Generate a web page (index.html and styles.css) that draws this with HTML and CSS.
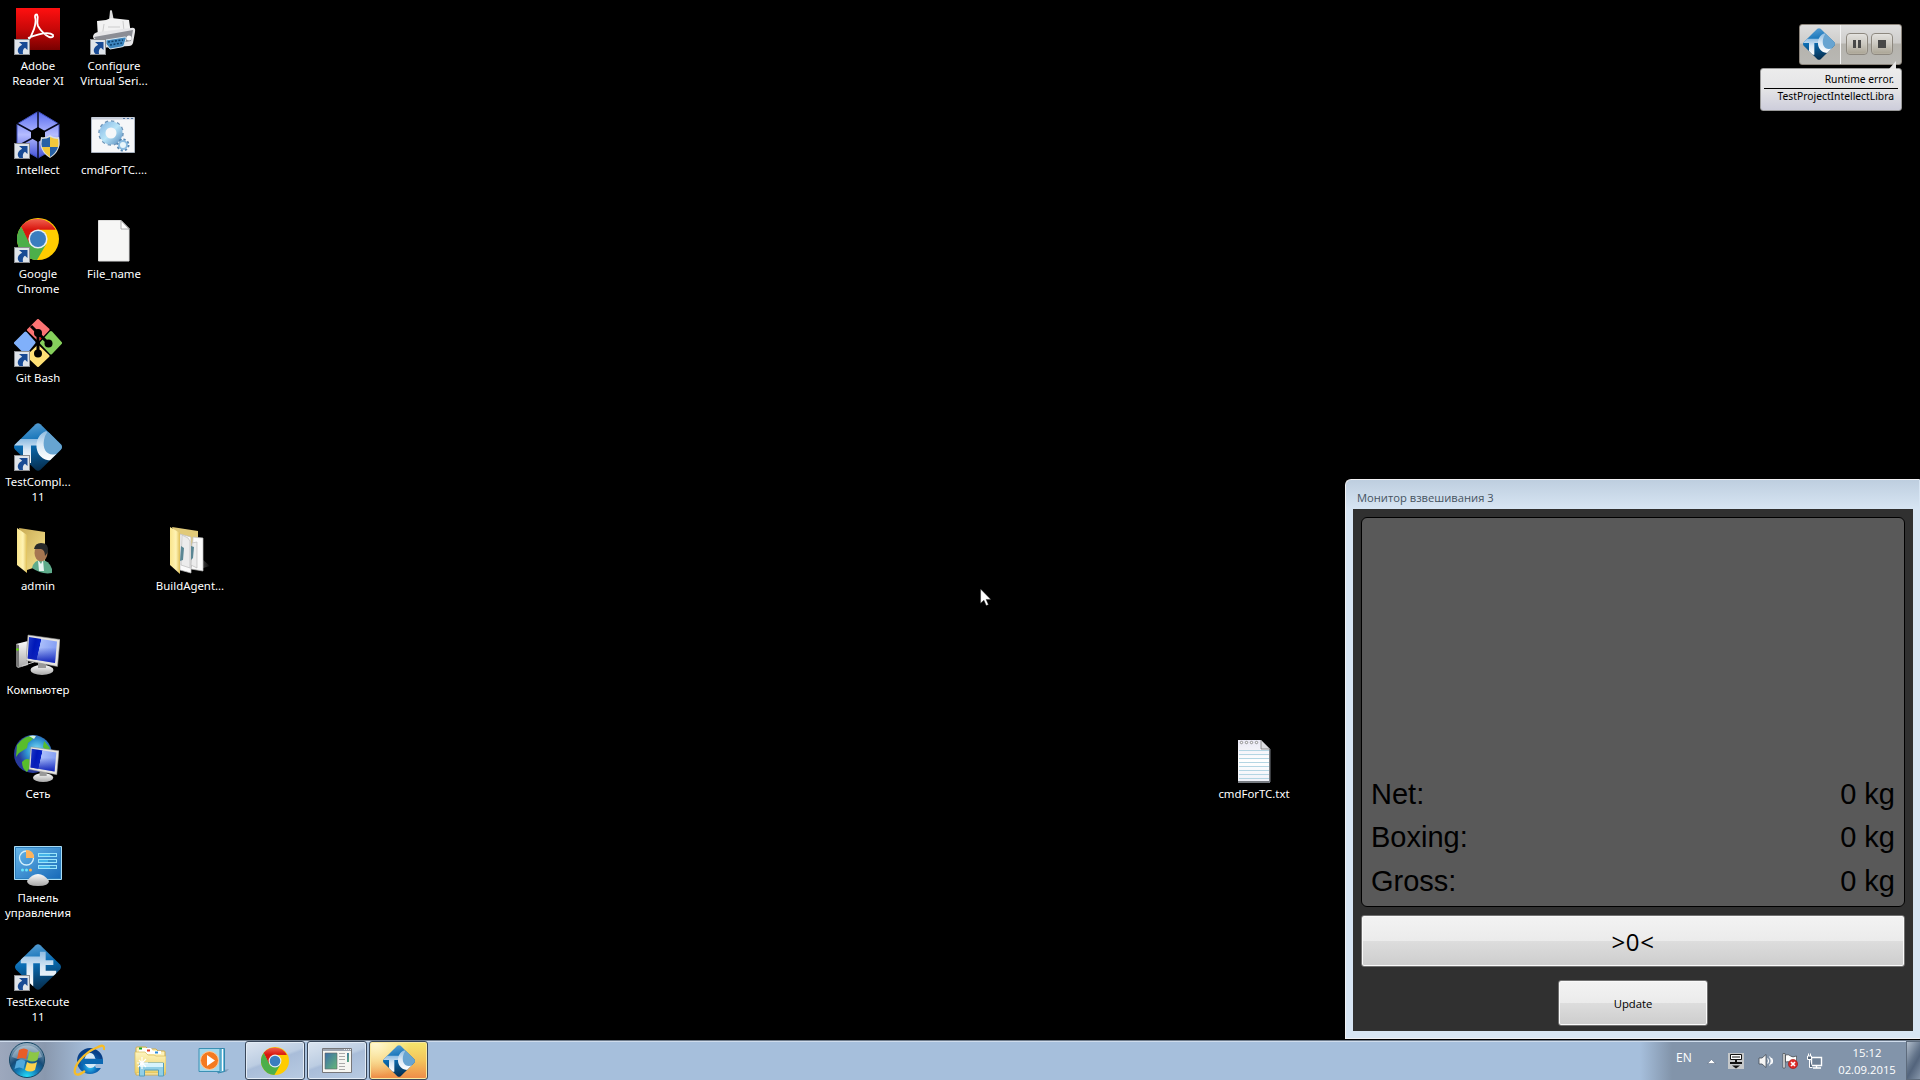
FILE: index.html
```html
<!DOCTYPE html>
<html lang="ru">
<head>
<meta charset="utf-8">
<title>Desktop</title>
<link rel="stylesheet" href="styles.css">
</head>
<body>
<svg class="defs" width="0" height="0">
  <defs>
    <linearGradient id="red" x2="0" y2="1"><stop stop-color="#ff1010"/><stop offset=".5" stop-color="#c80808"/><stop offset="1" stop-color="#780000"/></linearGradient>
    <linearGradient id="tcblue" x1=".2" y1="0" x2=".4" y2="1"><stop stop-color="#5da2d6"/><stop offset=".45" stop-color="#0a6db4"/><stop offset="1" stop-color="#062f50"/></linearGradient>
    <linearGradient id="tcwhite" x2="0" y2="1"><stop stop-color="#8dbce2"/><stop offset=".45" stop-color="#d8e7f4"/><stop offset="1" stop-color="#fff"/></linearGradient>
    <linearGradient id="hex" x2="0" y2="1"><stop stop-color="#5569ee"/><stop offset=".5" stop-color="#b5bcff"/><stop offset="1" stop-color="#4351d8"/></linearGradient>
    <linearGradient id="folder" x2="1" y2="0"><stop stop-color="#f9e48b"/><stop offset=".6" stop-color="#fff3b4"/><stop offset="1" stop-color="#dfbf57"/></linearGradient>
    <linearGradient id="folderback" x2="1" y2="1"><stop stop-color="#c9ab55"/><stop offset="1" stop-color="#f7e48e"/></linearGradient>
    <linearGradient id="screen" x2="1" y2=".2"><stop stop-color="#203cc8"/><stop offset=".28" stop-color="#0018b8"/><stop offset=".45" stop-color="#0420c4"/><stop offset=".47" stop-color="#a9bdfa"/><stop offset="1" stop-color="#86a0f4"/></linearGradient>
    <linearGradient id="screenfade" x2="0" y2="1"><stop offset=".4" stop-color="#1022b8" stop-opacity="0"/><stop offset="1" stop-color="#1022b8"/></linearGradient>
    <linearGradient id="metal" x2="0" y2="1"><stop stop-color="#fbfbfb"/><stop offset="1" stop-color="#a7a7a7"/></linearGradient>
    <radialGradient id="globe" cx=".6" cy=".4"><stop stop-color="#83e2fa"/><stop offset=".55" stop-color="#2e92d0"/><stop offset="1" stop-color="#27399a"/></radialGradient>
    <linearGradient id="panel" x2="1" y2="1"><stop stop-color="#69b8ea"/><stop offset="1" stop-color="#1668b8"/></linearGradient>
    <linearGradient id="gear" x2="1" y2="1"><stop stop-color="#8fc0e8"/><stop offset=".5" stop-color="#b9e5f8"/><stop offset="1" stop-color="#6ea0cc"/></linearGradient>
    <linearGradient id="shadefade" x2="1" y2="0"><stop stop-color="#555"/><stop offset="1" stop-color="#000"/></linearGradient>
    <radialGradient id="orb" cx=".5" cy="1" r=".95"><stop stop-color="#25e6ff"/><stop offset=".35" stop-color="#1378b4"/><stop offset=".6" stop-color="#164c78"/><stop offset="1" stop-color="#8fa9bd"/></radialGradient>
    <radialGradient id="ie" cx=".5" cy=".8" r=".8"><stop stop-color="#30c8fa"/><stop offset=".5" stop-color="#0b66b4"/><stop offset="1" stop-color="#083f86"/></radialGradient>
    <linearGradient id="files" x2="0" y2="1"><stop stop-color="#fdf4c0"/><stop offset="1" stop-color="#eed168"/></linearGradient>
    <linearGradient id="crred" x2="0" y2="1"><stop stop-color="#f0604f"/><stop offset=".5" stop-color="#d9170f"/></linearGradient>
    <linearGradient id="thumb" x2="1" y2="1"><stop stop-color="#3e6ea8"/><stop offset="1" stop-color="#64b878"/></linearGradient>
    <linearGradient id="paper" x2="0" y2="1"><stop stop-color="#e9e8f4"/><stop offset=".5" stop-color="#fff"/><stop offset="1" stop-color="#eff1f8"/></linearGradient>
    <symbol id="shortcut" viewBox="0 0 16 16">
      <path fill="#8b8d91" d="M0 0h16v16H0z"/><path fill="#dfe4ea" d="M1 1h14v14H1z"/>
      <path fill="#184a94" d="M5 3h8.500v8l-2.500-2.300C9 10 8.500 12 9 15H5.500C2.500 12 3.500 8 8.200 5.700z"/>
    </symbol>
    <symbol id="tc" viewBox="0 0 48 48">
      <clipPath id="dia"><path d="M21.500 1.300Q24 -.7 26.500 1.300L47 21.500Q49 24 47 26.500L26.500 46.700Q24 48.700 21.500 46.700L1 26.500Q-1 24 1 21.500z"/></clipPath>
      <g clip-path="url(#dia)"><path fill="url(#tcblue)" d="M0 0h48v48H0z"/>
      <circle cx="37" cy="21" r="12" fill="#67a4d1"/>
      <path fill="url(#tcwhite)" d="M0 16h24v6.500h-7V40H9V22.500H0z"/>
      <path fill="url(#tcwhite)" d="M32 8C18 13 19 38 38 37.500L45 30C34 35 28 27 30 17Q31 11 34 9z"/></g>
    </symbol>
    <symbol id="te" viewBox="0 0 48 48">
      <g clip-path="url(#dia)"><path fill="url(#tcblue)" d="M0 0h48v48H0z"/>
      <path fill="url(#tcwhite)" d="M6 13h20V8h6v9h8v5h-8v6h11v5H26V20h-7v24h-7V20H6z"/></g>
    </symbol>
    <symbol id="chrome" viewBox="0 0 42 42">
      <circle cx="21" cy="21" r="21" fill="#fc0"/>
      <path fill="url(#crred)" d="M4.200 8.500A21 21 0 0 1 38.500 11.500H21L12 26z"/>
      <path fill="#4caf4a" d="M4.200 8.500A21 21 0 0 0 20 42L29 26.500H13z"/>
      <path fill="url(#crred)" d="M4.200 8.500A21 21 0 0 1 38.500 11.500H21L12.500 22z"/>
      <circle cx="21" cy="21" r="9.600" fill="#e8eef4"/><circle cx="21" cy="21" r="8" fill="#3a7dbf"/>
    </symbol>
    <symbol id="monitor" viewBox="0 0 34 42">
      <ellipse cx="16" cy="36" rx="11.500" ry="5" fill="url(#metal)"/><path fill="#999" d="M12 28h8v6h-8z"/>
      <path fill="#e6e4e0" stroke="#8d8d8d" stroke-width=".6" d="M2 1l32 4.500-2.500 27L0 26.500z"/>
      <path fill="url(#screen)" d="M3 3l28 4.500-2 21.500L1.700 24.500z"/><path fill="url(#screenfade)" d="M3 3l28 4.500-2 21.500L1.700 24.500z"/>
    </symbol>
  </defs>
</svg>

<main class="desktop">
  <div class="item r1 c1"><svg class="icon" viewBox="0 0 48 48"><path fill="url(#red)" d="M2 1h44v42H2z"/><path fill="none" stroke="#fff" stroke-width="1.800" d="M13 35C19 28 23 16 21 10Q21 7 23 7.500C25 11 22 15 24 19Q28 26 35 30Q40 31 39 28Q34 23 14 31"/><use href="#shortcut" y="32" width="16" height="16"/></svg><span class="label">Adobe<br>Reader XI</span></div>
  <div class="item r2 c1"><svg class="icon" viewBox="0 0 48 48"><path fill="url(#hex)" stroke="#4050bb" d="M24 .5L45 13v22L24 47 3 35V13z"/><path stroke="#070a20" stroke-width="1.500" d="M24 0v48M3 12.500l42 23M45 12.500l-42 23"/><path fill="#000" d="M24 16l7 4v7l-7 4-7-4v-7z"/><path fill="#d9dee2" d="M36 24q4 3 9 2 3 14-9 21-12-7-9-21 5 1 9-2z"/><path fill="#2861a4" d="M36 26v10h-8q-1-3 0-8 5 0 8-2zm0 10h8q-2 6-8 10z"/><path fill="#f2c83b" d="M36 26q4 2 8 2 1 4 0 8h-8zm-8 10h8v10q-6-4-8-10z"/><use href="#shortcut" y="32" width="16" height="16"/></svg><span class="label">Intellect</span></div>
  <div class="item r3 c1"><svg class="icon" viewBox="0 0 48 48"><use href="#chrome" x="3" y="3" width="42" height="42"/><use href="#shortcut" y="32" width="16" height="16"/></svg><span class="label">Google<br>Chrome</span></div>
  <div class="item r4 c1"><svg class="icon" viewBox="0 0 48 48"><g stroke-linejoin="round" stroke-width="3"><path fill="#fc7474" stroke="#fc7474" d="M24 1.500l10 9-9.500 10-10-9.500z"/><path fill="#80b0fa" stroke="#80b0fa" d="M11.500 14L20 23.500 11.500 34 1.500 24z"/><path fill="#86d05c" stroke="#86d05c" d="M37 13.500l9.500 10.500L37 34l-9.500-10z"/><path fill="#fee075" stroke="#fee075" d="M24 27.500L34 37l-10 9.500L14 37z"/></g><path fill="none" stroke="#000" stroke-width="3" d="M17 7l7 7v20M24 14l11 11"/><circle cx="24" cy="14" r="4"/><circle cx="34.500" cy="24.500" r="4"/><circle cx="24" cy="34.500" r="4"/><circle cx="26.500" cy="19.500" r=".8" fill="#f00"/><use href="#shortcut" y="32" width="16" height="16"/></svg><span class="label">Git Bash</span></div>
  <div class="item r5 c1"><svg class="icon" viewBox="0 0 48 48"><use href="#tc" width="48" height="48"/><use href="#shortcut" y="32" width="16" height="16"/></svg><span class="label">TestCompl...<br>11</span></div>
  <div class="item r6 c1"><svg class="icon" viewBox="0 0 48 48"><path fill="url(#folderback)" d="M5 1l26 4v32l-18 6z"/><path fill="url(#folder)" d="M3 1l10 7v38L3 38z"/><path fill="#5eab8b" d="M18 41q2-8 9-8 8 0 11 9v4q-10 2-20-5z"/><path fill="#e8f4f0" d="M24 33l3 4 2-4 1 11h-5z"/><ellipse cx="27" cy="26" rx="6.500" ry="8.500" fill="#a67651"/><path fill="#27292b" d="M20 22q1-6 7-6 8 0 7 9l-3 4q0-6-4-7z"/></svg><span class="label">admin</span></div>
  <div class="item r7 c1"><svg class="icon" viewBox="0 0 48 48"><path fill="url(#metal)" d="M2 13l12-3v24L4 37l-2-2z"/><path fill="#777" d="M2 13l3 1v22l-3-1z"/><circle cx="3.500" cy="18.500" r="1.200" fill="#5fe000"/><path stroke="#ccc" d="M8 35l12-4"/><use href="#monitor" x="12" y="3" width="34" height="42"/></svg><span class="label">Компьютер</span></div>
  <div class="item r8 c1"><svg class="icon" viewBox="0 0 48 48"><circle cx="19" cy="19" r="19" fill="url(#globe)"/><path fill="#58bd2c" d="M3 10Q9 2 16 1l3 3-5 4-1 5-8 5-3 4zM8 27q4-5 8-2l2 4-5 8q-5-3-5-10zM30 6l6 7-3 4-4-5z"/><path fill="#d7f4dc" d="M15 1q4-1 7 0l-2 3z"/><use href="#monitor" x="15" y="11" width="30" height="37"/></svg><span class="label">Сеть</span></div>
  <div class="item r9 c1"><svg class="icon" viewBox="0 0 48 48"><path fill="url(#panel)" stroke="#a9dcf5" d="M.5 7.500h47v33H.5z"/><path fill="none" stroke="#2d7ebd" d="M1.500 8.500h45v31h-45z"/><circle cx="12.500" cy="19" r="7" fill="none" stroke="#d4f0fc" stroke-width="1.300"/><path fill="#fdb35b" d="M12 19v-8q8 0 8 8z"/><path stroke="#9ce5fb" stroke-width="4" d="M24 16h19M24 22h19M24 28h19"/><path stroke="#1374ba" stroke-width="1.500" d="M25 16h17M25 22h17M25 28h17"/><path stroke="#49c0f4" stroke-width="1.500" d="M25 16h11M25 22h9M25 28h11"/><circle cx="8.500" cy="31" r="1.500" fill="#67e5fc"/><circle cx="12.500" cy="31" r="1.500" fill="#67e5fc"/><circle cx="16.500" cy="31" r="1.500" fill="#ffad43"/><path fill="url(#metal)" d="M13 42q5-7 11-7t11 7q0 5-11 5t-11-5z"/></svg><span class="label">Панель<br>управления</span></div>
  <div class="item r10 c1"><svg class="icon" viewBox="0 0 48 48"><use href="#te" x="1" y="1" width="46" height="46"/><use href="#shortcut" y="32" width="16" height="16"/></svg><span class="label">TestExecute<br>11</span></div>

  <div class="item r1 c2"><svg class="icon" viewBox="0 0 48 48"><path fill="#ddd" d="M19 14l1-10q1-2 2 0l2 10z"/><path fill="#f2f2f2" d="M7 14l9-1 5-2 9 1 9 1 2 14-33 4z"/><path stroke="#ccc" d="M14 17l-2 13M18 20h12M33 14l1 10"/><path fill="#e6e6e8" d="M3 30q0-4 5-5l33-4q5-1 4 4l-2 11q-1 3-4 3L8 41z"/><path fill="#8b8d94" d="M4 30l39-7-2 11-30 5z"/><path fill="#3d86be" stroke="#d9e6ee" d="M16 33l19-3q2 0 1 2l-2 6q0 2-3 2l-11 2-4-5z"/><path stroke="#0d3f6b" stroke-width="1.500" stroke-dasharray="2 1.500" d="M18 35l15-2M20 38l12-2"/><circle cx="39" cy="31" r="2.500" fill="#f8f8f8"/><use href="#shortcut" y="32" width="16" height="16"/></svg><span class="label">Configure<br>Virtual Seri...</span></div>
  <div class="item r2 c2"><svg class="icon" viewBox="0 0 48 48"><path fill="#f6f7f9" stroke="#a9b2bf" d="M1.500 6.500h43v35h-43z"/><path fill="#c7ced9" d="M2 6h42v2.500H2z"/><path stroke="#5177a4" stroke-dasharray="2 2" d="M33 7.500h12"/><circle cx="21" cy="22" r="10" fill="none" stroke="#6d94b8" stroke-width="5.500" stroke-dasharray="2.800 2.400" /><circle cx="21" cy="22" r="8.500" fill="none" stroke="url(#gear)" stroke-width="6"/><circle cx="33" cy="34" r="4.500" fill="none" stroke="#5586b1" stroke-width="4" stroke-dasharray="1.800 1.700"/><circle cx="33" cy="34" r="4" fill="#e9f6fb" stroke="#8abbe0" stroke-width="2"/></svg><span class="label">cmdForTC....</span></div>
  <div class="item r3 c2"><svg class="icon" viewBox="0 0 48 48"><path fill="#f6f6f5" stroke="#dededd" d="M8.500 5.500H31l8 8v32.500H8.500z"/><path fill="#fff" stroke="#999" stroke-width=".8" d="M31 5.500V14h8z"/></svg><span class="label">File_name</span></div>
  <div class="item r6 c3"><svg class="icon" viewBox="0 0 48 48"><g transform="translate(1)"><path fill="#e1ca79" d="M5 0l26 4v8L16 30z"/><path fill="url(#shadefade)" d="M33 42l10-3-8-7z"/><path fill="#fafafa" stroke="#bbb" stroke-width=".7" d="M13 7l11 3v36l-11-3zM26 10l10 1v33l-12-2z"/><path fill="#ececec" stroke="#bbb" stroke-width=".7" d="M15 8l6 3 2 3v27l-9-3zM25 16l5-1v26l-6-3z"/><path fill="#5a8693" d="M14 19l3 2-1 12-3 1zM24 19l3 1-1 11-2 2z"/><path fill="url(#folder)" d="M3 0l10 6v41L3 38z"/></g></svg><span class="label">BuildAgent...</span></div>
  <div class="item r8 note"><svg class="icon" viewBox="0 0 48 48"><path fill="url(#paper)" d="M8 5h23l9 9v33H8z"/><path fill="#777b81" d="M8 46h32v2H8zM39 14h1.500v33H39z"/><path stroke="#b4d5e3" d="M9 15.500h30M9 19.500h30M9 23.500h30M9 27.500h30M9 31.500h30M9 35.500h30M9 39.500h30M9 43.500h30"/><path fill="#dcdce0" stroke="#777" stroke-width=".8" d="M31 5v9h9z"/><g fill="#fff" stroke="#777" stroke-width=".8"><circle cx="11.500" cy="7.500" r="1.200"/><circle cx="16.500" cy="7.500" r="1.200"/><circle cx="21.500" cy="7.500" r="1.200"/><circle cx="26.500" cy="7.500" r="1.200"/></g></svg><span class="label">cmdForTC.txt</span></div>

  <svg class="cursor" viewBox="0 0 12 19"><path fill="#fff" stroke="#222" stroke-width=".5" d="M.5 0v16l3.700-3.500 2.600 6 2.500-1-2.600-5.800H12z"/></svg>

  <section class="runner">
    <div class="toolbox">
      <div class="brand"><svg width="32" height="32"><use href="#tc"/></svg></div>
      <div class="controls"><span class="control"><svg width="20" height="20"><path fill="#484848" d="M6 6h3v8H6zM11 6h3v8h-3z"/></svg></span><span class="control"><svg width="20" height="20"><path fill="#484848" d="M6 6h8v8H6z"/></svg></span></div>
    </div>
    <div class="bubble"><svg class="tail" viewBox="0 0 8 8"><path fill="#e6e6e6" d="M0 8L7 0v8z"/></svg><p class="status">Runtime error.</p><p class="project">TestProjectIntellectLibra</p></div>
  </section>

  <section class="window">
    <header class="title">Монитор взвешивания 3</header>
    <div class="content">
      <div class="display">
        <div class="reading"><span>Net:</span><span>0 kg</span></div>
        <div class="reading"><span>Boxing:</span><span>0 kg</span></div>
        <div class="reading"><span>Gross:</span><span>0 kg</span></div>
      </div>
      <button class="button zero">&gt;0&lt;</button>
      <button class="button update">Update</button>
    </div>
  </section>
</main>

<footer class="taskbar">
  <div class="launch start"><svg width="38" height="38" viewBox="0 0 38 38"><circle cx="19" cy="19" r="17.500" fill="url(#orb)" stroke="#164766"/><path fill="#fff" fill-opacity=".3" d="M4 16a15.500 15.500 0 0 1 30 0q-15 7-30 0z"/><path fill="#e85d28" d="M11 9q5-3 9 0l-2 9q-4-2-9 0z"/><path fill="#8cc746" d="M21.500 10q5 3 10 0l-2 9q-5 3-10 0z"/><path fill="#52a9dc" d="M8.500 20q5-3 9 0l-2 8q-4-3-9 0z"/><path fill="#fbd24c" d="M19 21q5 3 10 0l-2 8q-5 3-10 0z"/></svg></div>
  <div class="launch ie"><svg width="32" height="32" viewBox="0 0 32 32"><circle cx="17" cy="17" r="9.500" fill="none" stroke="url(#ie)" stroke-width="7"/><path fill="#0c68b2" d="M8 15h22v5H8z"/><path fill="#a7bfdd" d="M21 20h10v4h-8z"/><path fill="#d5eaf7" d="M12 14q1-5 5-5t5 5zM12 20h11l-2 3q-6 3-9-3z"/><path fill="none" stroke="#f7bd29" stroke-width="2.300" d="M31 6Q32-1 24 3.500C12 8 0 22 2 29Q4 33 12 27"/></svg></div>
  <div class="launch explorer"><svg width="32" height="32" viewBox="0 0 32 32"><path fill="#fdf1b8" stroke="#d0ad4c" d="M2 30V3q0-1 1-1h9l2 2h8l2 2h6q1 0 1 1v23z"/><path fill="#fff" d="M5 3h12l2 3h8v3H5z"/><path fill="#19a51f" d="M5 2.500h3v2H5z"/><path fill="#dc3c24" d="M13 4.500h3v2h-3z"/><path fill="#2c8cdc" d="M21 6.500h3v2h-3z"/><path fill="url(#files)" stroke="#d8ba58" stroke-width=".7" d="M1 7h10l3 3h6l2 1h10v17H1z"/><path fill="#91cfe6" stroke="#559ebc" d="M5.500 31V18h24v13h-5v-6h-14v6z"/><path fill="#d6f3fc" d="M6 18h23v4H6z"/><path stroke="#fff" stroke-width="1.200" d="M8 12v12M3 18h11M5 15l7 7M12 14l-8 8"/></svg></div>
  <div class="launch player"><svg width="32" height="32" viewBox="0 0 32 32"><path fill="#7f9db9" d="M26 25l5-1-3 3H20z"/><path fill="#71bddb" stroke="#3387ac" d="M20 3.500h6.500v23L20 28z"/><path fill="#a4d8ec" stroke="#3b91b4" d="M1 3.500h21v23H1z"/><path stroke="#fff" d="M24.500 4v22"/><circle cx="11.500" cy="15.500" r="9" fill="#f47a20" stroke="#ffc895"/><path fill="#fff" d="M9 10l8 5.500-8 5.500z"/></svg></div>
  <div class="task"><svg width="28" height="28"><use href="#chrome"/></svg></div>
  <div class="task"><svg width="30" height="26" viewBox="0 0 30 26"><path fill="#f6f6f2" stroke="#77777a" d="M.5.500h29v24H.5z"/><path fill="#9ea5b0" d="M1 1h28v2H1z"/><path stroke="#e8edf2" stroke-dasharray="1 1" d="M22 1.500h7"/><path fill="url(#thumb)" stroke="#666" stroke-width=".6" d="M3 5h12v16H3z"/><path stroke="#aaa" d="M17 5.500h6M17 8.500h6M17 11.500h6M17 15.500h6M17 18.500h6M17 21.500h6"/><path fill="url(#thumb)" d="M25 5h2v9h-2z"/></svg></div>
  <div class="task alert"><svg width="32" height="32"><use href="#tc"/></svg></div>
  <div class="tray">
    <span class="lang">EN</span>
    <svg class="caret" width="9" height="5"><path fill="#fff" stroke="#55657a" stroke-width=".5" d="M.500 4.500l4-4 4 4z"/></svg>
    <svg class="device" width="16" height="16"><path fill="#c5c8ca" d="M0 0h16v16H0z"/><path fill="#fff" stroke="#111" d="M2.500 1.500h11v5h-11z"/><path fill="#888" d="M4 3h8v2H4z"/><path fill="#111" d="M7 7h2v2h5v2H2V9h5zM4 12.500h8l-4 3z"/></svg>
    <svg class="sound" width="16" height="16"><path fill="#f5f5f5" stroke="#444b55" stroke-width=".8" d="M1 5h3l4-3.500v13L4 11H1z"/><path fill="none" stroke="#fff" stroke-width="1.100" d="M9.500 5.500q2 2.500 0 5M11.500 3.500q3.500 4.500 0 9M13.500 5q2 3 0 6"/></svg>
    <svg class="flag" width="16" height="16"><path fill="#fff" stroke="#333" stroke-width=".6" d="M1 .5h2V15H1zM3.500 2q3-1 5 1t6 0v7q-4 1-6-.500t-5-.500z"/><circle cx="11" cy="11" r="4.600" fill="#dd2b27" stroke="#9d1511" stroke-width=".6"/><path stroke="#fff" stroke-width="1.700" d="M9 9l4 4M13 9l-4 4"/></svg>
    <svg class="net" width="17" height="16"><path fill="#6f8196" stroke="#fff" stroke-width="1.400" d="M5.500 4.500h10v8h-10z"/><path stroke="#fff" stroke-width="1.400" d="M7 15h8M10.500 12.500V15"/><path fill="#56667a" stroke="#fff" d="M1.500 3v3.500h4V3zM2.500.5V3M4.500.5V3M3.500 6.500v8h3" /></svg>
    <div class="clock"><span>15:12</span><span>02.09.2015</span></div>
    <div class="peek"></div>
  </div>
</footer>
</body>
</html>
```

FILE: styles.css
```css
* { box-sizing: border-box; }
body { margin: 0; background: #000; font-family: "Open Sans", "Noto Sans", sans-serif; font-size: 12px; overflow: hidden; }
svg { display: block; flex: none; }
.defs { position: absolute; }
.desktop { position: relative; width: 1920px; height: 1040px; }

/* desktop shortcuts, placed freely on the canvas */
.item { position: absolute; width: 76px; display: flex; flex-direction: column; align-items: center; gap: 3px; color: #fff; }
.icon { width: 48px; height: 48px; }
.label { font-family: "Noto Sans", sans-serif; font-size: 11.400px; line-height: 15px; text-align: center; white-space: nowrap; }
.c1 { left: 0; } .c2 { left: 76px; } .c3 { left: 152px; } .note { left: 1216px; }
.r1 { top: 7px; } .r2 { top: 111px; } .r3 { top: 215px; } .r4 { top: 319px; } .r5 { top: 423px; }
.r6 { top: 527px; } .r7 { top: 631px; } .r8 { top: 735px; } .r9 { top: 839px; } .r10 { top: 943px; }
.cursor { position: absolute; left: 980px; top: 589px; width: 11px; height: 17px; }

/* test runner indicator */
.runner { position: absolute; left: 1760px; top: 24px; width: 142px; display: flex; flex-direction: column; align-items: flex-end; gap: 3px; }
.toolbox { display: flex; width: 103px; height: 41px; border: 1px solid #8c857c; border-radius: 3px; background: linear-gradient(#dedede, #cecdcb 45%, #b5b3ad 50%, #b9b8b4); }
.brand { width: 41px; padding: 3px 0 0 3px; border-right: 1px solid #f3f3f3; }
.controls { display: flex; gap: 3px; padding: 8px 0 0 5px; }
.control { width: 22px; height: 22px; border: 1px solid #8d887f; border-radius: 4px; background: linear-gradient(#e2e1dd, #cbc8c0 50%, #aaa494); box-shadow: inset 0 0 1px #fff; }
.bubble { position: relative; width: 142px; height: 43px; padding: 3px 7px 0 3px; border: 1px solid #999; border-radius: 3px; background: linear-gradient(#ececec, #e4e4e6 50%, #cdcddb); font-family: "Noto Sans", sans-serif; font-size: 10.300px; color: #000; text-align: right; }
.bubble p { margin: 0; line-height: 15px; white-space: nowrap; }
.bubble .status { height: 17px; border-bottom: 1px solid #000; margin-right: -4px; padding-right: 4px; }
.tail { position: absolute; right: 4px; top: -8px; width: 8px; height: 8px; }

/* weighing monitor */
.window { position: absolute; left: 1345px; top: 479px; width: 575px; height: 560px; padding: 0 6px 7px 7px; border: 1px solid #f1f1f4; border-right-color: #d7e5f3; border-radius: 6px 0 0 0; background: linear-gradient(#becedf, #d7e5f3 29px); }
.title { height: 29px; padding: 9px 0 0 4px; font-size: 11.200px; line-height: 18px; color: #46535f; }
.content { height: 522px; padding: 8px; background: #303030; display: flex; flex-direction: column; align-items: center; }
.display { flex: none; width: 544px; height: 390px; padding: 0 9px 3px 9px; border: 1px solid #000; border-radius: 6px; background: #595959; display: flex; flex-direction: column; justify-content: flex-end; }
.reading { display: flex; justify-content: space-between; font: 29px/43.500px "Liberation Sans", Arial, sans-serif; color: #000; }
.button { flex: none; padding: 0; border: 1px solid #707070; border-radius: 3px; background: linear-gradient(#f3f3f3, #ebebeb 50%, #dddddd 50%, #cdcdcd); box-shadow: inset 0 0 0 1px #fafafa; font-family: "Open Sans", sans-serif; color: #000; }
.zero { width: 544px; height: 52px; margin-top: 8px; font-size: 24px; letter-spacing: .6px; }
.update { width: 150px; height: 46px; margin-top: 13px; font-size: 11.300px; }

/* taskbar */
.taskbar { position: relative; display: flex; height: 40px; border-top: 1px solid #6e7b8b; background: linear-gradient(90deg, #9da8bd, #8998ae 45px, #a6bfdc 90px, #a6bfdc 1640px, #8294aa 1672px); box-shadow: inset 0 1px #cfdcec; }
.launch { flex: none; display: flex; align-items: flex-start; }
.start { width: 73px; padding: 0 0 0 8px; }
.ie { width: 61px; padding-top: 3px; }
.explorer { width: 64px; padding-top: 4px; }
.player { width: 47px; padding-top: 4px; }
.task { flex: none; width: 60px; height: 39px; margin-right: 2px; display: flex; align-items: center; justify-content: center; border: 1px solid #39475a; border-radius: 3px; box-shadow: inset 0 0 0 1px #e3ecf6; background: linear-gradient(160deg, #dce5f0, #bccde2 45%, #a9bdd9 50%, #b8cbe2); }
.alert { width: 59px; background: radial-gradient(circle at 10% 0, #fff7d5, transparent 55%), linear-gradient(#f5e66d, #f4c45b 50%, #ee8a48); box-shadow: inset 0 0 0 1px #fae9a0; }
.tray { margin-left: auto; display: flex; align-items: flex-start; color: #fff; }
.lang { width: 31px; padding-top: 8px; font-size: 12px; line-height: 18px; }
.caret { margin: 18px 12px 0 0; }
.device { margin: 12px 14px 0 0; }
.sound { margin: 12px 8px 0 0; }
.flag { margin: 12px 8px 0 0; }
.net { margin: 12px 17px 0 0; }
.clock { display: flex; flex-direction: column; align-items: center; width: 54px; padding-top: 3px; font-size: 11.300px; line-height: 17px; white-space: nowrap; }
.peek { width: 14px; height: 39px; margin-left: 12px; border: 1px solid #5d6b7c; border-right: 0; background: linear-gradient(120deg, #b1bdcb, #64758b 45%, #53647c 60%, #8696aa); }
```
